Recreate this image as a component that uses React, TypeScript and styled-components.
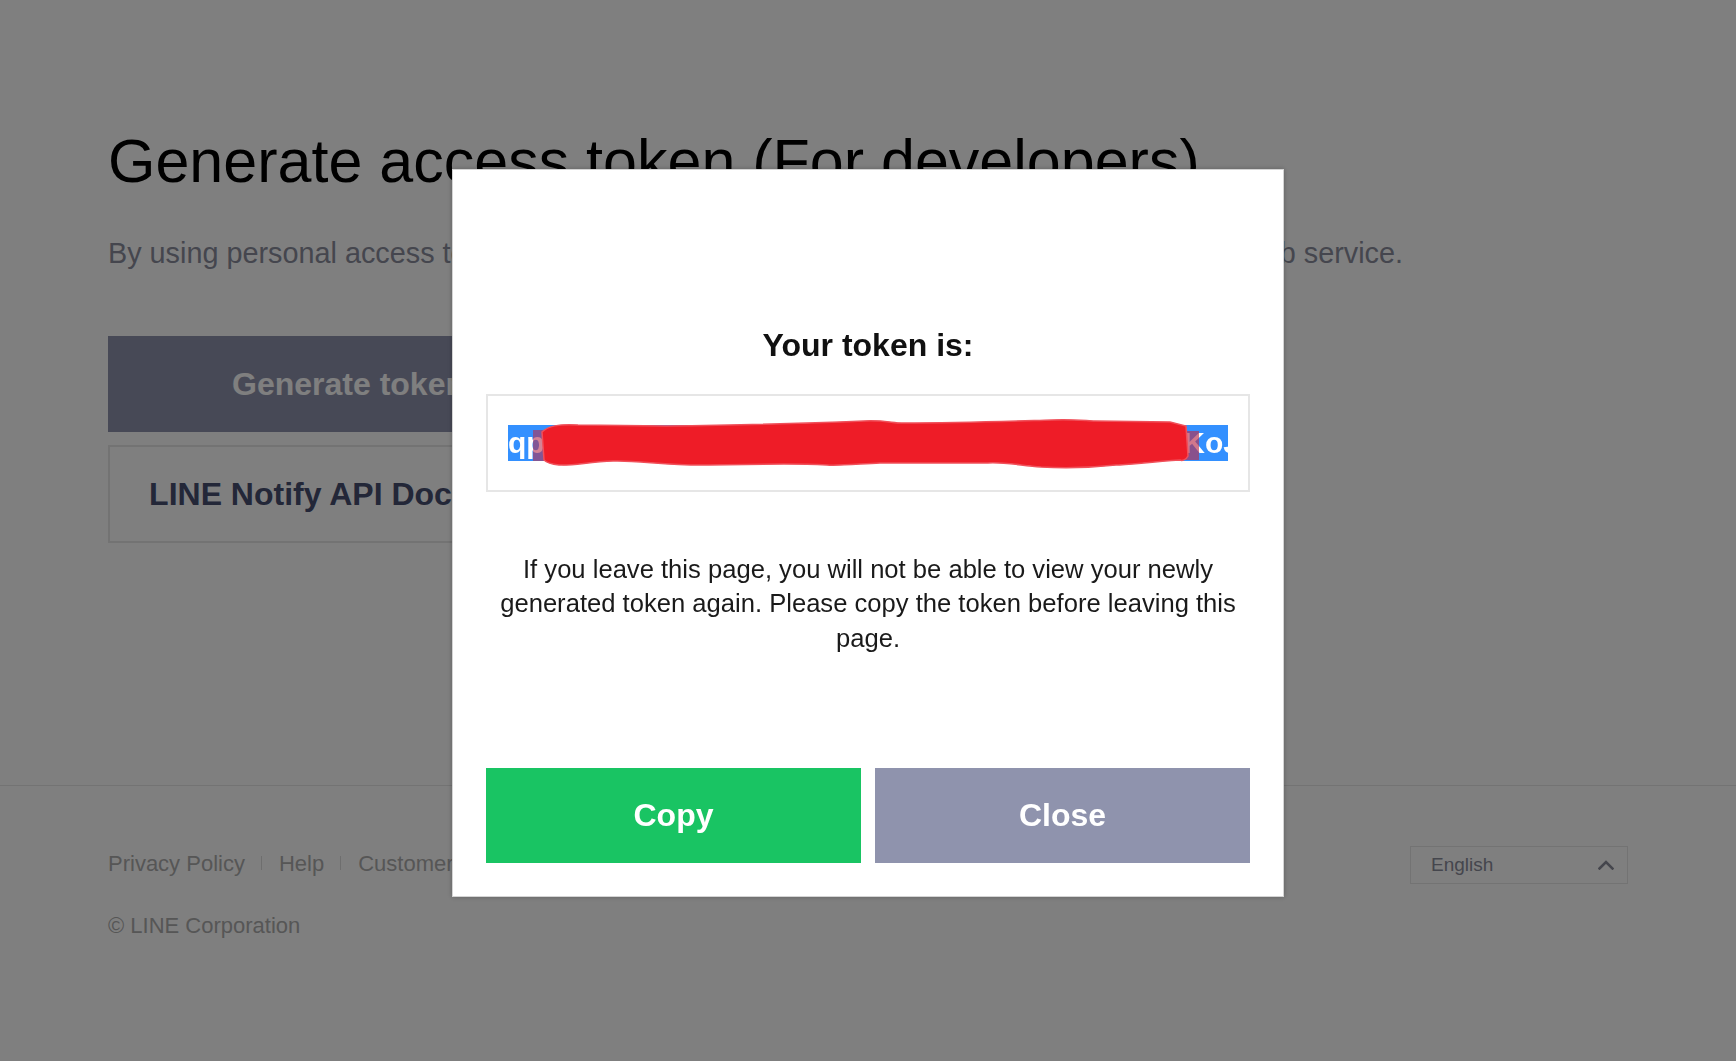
import React from 'react';
import styled, { createGlobalStyle } from 'styled-components';

const GlobalStyle = createGlobalStyle`
  html, body {
    margin: 0;
    padding: 0;
    background: #ffffff;
  }
  body {
    font-family: "Liberation Sans", Arial, sans-serif;
  }
  *, *::before, *::after {
    box-sizing: border-box;
  }
`;

const Page = styled.div`
  min-height: 1061px;
  display: flex;
  flex-direction: column;
  background: #ffffff;
`;

const Main = styled.main`
  padding: 127px 108px 242px;
`;

const Title = styled.h1`
  margin: 0;
  font-size: 61px;
  font-weight: 400;
  line-height: 69px;
  color: #000000;
`;

const Lead = styled.p`
  margin: 41px 0 0;
  font-size: 28.8px;
  line-height: 32px;
  color: #8a8d9c;
`;

const ButtonStack = styled.div`
  margin-top: 67px;
  width: 481px;
  display: flex;
  flex-direction: column;
  gap: 13px;
`;

const PageButton = styled.button<{ $variant: 'filled' | 'outline' }>`
  display: flex;
  align-items: center;
  justify-content: center;
  width: 100%;
  height: ${(p) => (p.$variant === 'filled' ? '96px' : '98px')};
  font-family: "Liberation Sans", Arial, sans-serif;
  font-size: 32px;
  font-weight: 700;
  cursor: pointer;
  background: ${(p) => (p.$variant === 'filled' ? '#8f93ad' : '#ffffff')};
  color: ${(p) => (p.$variant === 'filled' ? '#ffffff' : '#474e70')};
  border: ${(p) => (p.$variant === 'filled' ? 'none' : '2px solid #e6e6e6')};
`;

const Footer = styled.footer`
  border-top: 1px solid #e6e6e6;
  padding: 60px 108px 0;
`;

const FooterRow = styled.div`
  display: flex;
  align-items: center;
  justify-content: space-between;
  height: 38px;
`;

const FooterLinks = styled.nav`
  display: flex;
  align-items: center;
`;

const FooterLink = styled.a`
  display: flex;
  align-items: center;
  font-size: 22px;
  line-height: 25px;
  color: #adadad;
  text-decoration: none;
  margin-top: -4px;

  & + &::before {
    content: "";
    display: block;
    width: 1px;
    height: 14px;
    background: #dcdcdc;
    margin: 0 17px 0 16px;
  }
`;

const LangSelect = styled.div`
  width: 218px;
  height: 38px;
  border: 1px solid #e6e6e6;
  display: flex;
  align-items: center;
  justify-content: space-between;
  padding: 0 13px 0 20px;
  font-size: 19px;
  color: #8a8c9a;
`;

const Copyright = styled.p`
  margin: 29px 0 0;
  font-size: 22px;
  line-height: 25px;
  color: #adadad;
`;

const Overlay = styled.div`
  position: fixed;
  inset: 0;
  background: rgba(0, 0, 0, 0.5);
  display: flex;
  align-items: center;
  justify-content: center;
`;

const Modal = styled.div`
  width: 832px;
  margin-top: 5px;
  background: #ffffff;
  border: 1px solid #d4d4d4;
  box-shadow: 0 0 5px rgba(0, 0, 0, 0.25);
  padding: 33px;
  display: flex;
  flex-direction: column;
`;

const ModalHeading = styled.h2`
  margin: 124px 0 0;
  text-align: center;
  font-size: 32px;
  line-height: 36px;
  font-weight: 700;
  color: #111111;
`;

const TokenBox = styled.div`
  position: relative;
  margin-top: 31px;
  height: 98px;
  border: 2px solid #e6e6e6;
  padding: 0 20px;
  display: flex;
  align-items: center;
`;

const TokenSelection = styled.div`
  flex: 1;
  height: 36px;
  background: #3390ff;
  color: #ffffff;
  font-size: 30px;
  font-weight: 700;
  line-height: 36px;
  display: flex;
  justify-content: space-between;
  overflow: hidden;
  white-space: nowrap;
`;

const TokenEnd = styled.span`
  margin-right: -12px;
`;

const Redaction = styled.svg`
  position: absolute;
  left: 0;
  top: 0;
  pointer-events: none;
`;

const Notice = styled.p`
  margin: 60px 0 0;
  text-align: center;
  font-size: 25.6px;
  line-height: 34.5px;
  color: #1a1a1a;
`;

const ModalActions = styled.div`
  margin-top: 113px;
  display: grid;
  grid-template-columns: 1fr 1fr;
  gap: 14px;
`;

const ModalButton = styled.button<{ $bg: string }>`
  height: 95px;
  border: none;
  background: ${(p) => p.$bg};
  color: #ffffff;
  font-family: "Liberation Sans", Arial, sans-serif;
  font-size: 32px;
  font-weight: 700;
  cursor: pointer;
`;

const ChevronUp = () => (
  <svg width="16" height="10" viewBox="0 0 16 10" fill="none">
    <polyline points="1.5,8.5 8,2 14.5,8.5" stroke="#8a8c9a" strokeWidth="2.6" strokeLinecap="square" />
  </svg>
);

const Scribble = () => (
  <Redaction width="764" height="98" viewBox="0 0 764 98">
    <rect x="45" y="34" width="17" height="31" fill="#b8304e" opacity="0.6" />
    <rect x="694" y="35" width="17" height="29" fill="#b8304e" opacity="0.65" />
    <path
      d="M 54 36 C 60 30, 70 28, 90 29 L 178 30 C 260 29, 330 27, 376 25 C 395 24, 405 27, 414 27 C 480 27, 530 25, 564 24 C 585 23, 600 25, 607 25 L 682 26 L 698 30 L 700 60 C 698 64, 694 65, 692 64 C 660 66, 640 69, 628 69 C 600 72, 570 72, 553 71 C 530 69, 515 66, 500 67 L 392 67 C 370 68, 350 70, 339 69 C 320 68, 305 68, 296 68 L 221 69 C 180 70, 150 64, 125 65 C 100 66, 85 70, 71 69 C 62 68, 58 66, 56 64 Z"
      fill="#ee1c27"
      stroke="#f0505a"
      strokeWidth="1.5"
    />
  </Redaction>
);

export default function App() {
  return (
    <>
      <GlobalStyle />
      <Page>
        <Main>
          <Title>Generate access token (For developers)</Title>
          <Lead>
            By using personal access tokens, you can configure notifications without having to add a web service.
          </Lead>
          <ButtonStack>
            <PageButton $variant="filled">Generate token</PageButton>
            <PageButton $variant="outline">LINE Notify API Document</PageButton>
          </ButtonStack>
        </Main>
        <Footer>
          <FooterRow>
            <FooterLinks>
              <FooterLink href="#">Privacy Policy</FooterLink>
              <FooterLink href="#">Help</FooterLink>
              <FooterLink href="#">Customer Support</FooterLink>
            </FooterLinks>
            <LangSelect>
              <span>English</span>
              <ChevronUp />
            </LangSelect>
          </FooterRow>
          <Copyright>© LINE Corporation</Copyright>
        </Footer>
      </Page>
      <Overlay>
        <Modal>
          <ModalHeading>Your token is:</ModalHeading>
          <TokenBox>
            <TokenSelection>
              <span>qp</span>
              <TokenEnd>KoJ</TokenEnd>
            </TokenSelection>
            <Scribble />
          </TokenBox>
          <Notice>
            If you leave this page, you will not be able to view your newly generated token again. Please copy the
            token before leaving this page.
          </Notice>
          <ModalActions>
            <ModalButton $bg="#19c463">Copy</ModalButton>
            <ModalButton $bg="#8f93ad">Close</ModalButton>
          </ModalActions>
        </Modal>
      </Overlay>
    </>
  );
}
